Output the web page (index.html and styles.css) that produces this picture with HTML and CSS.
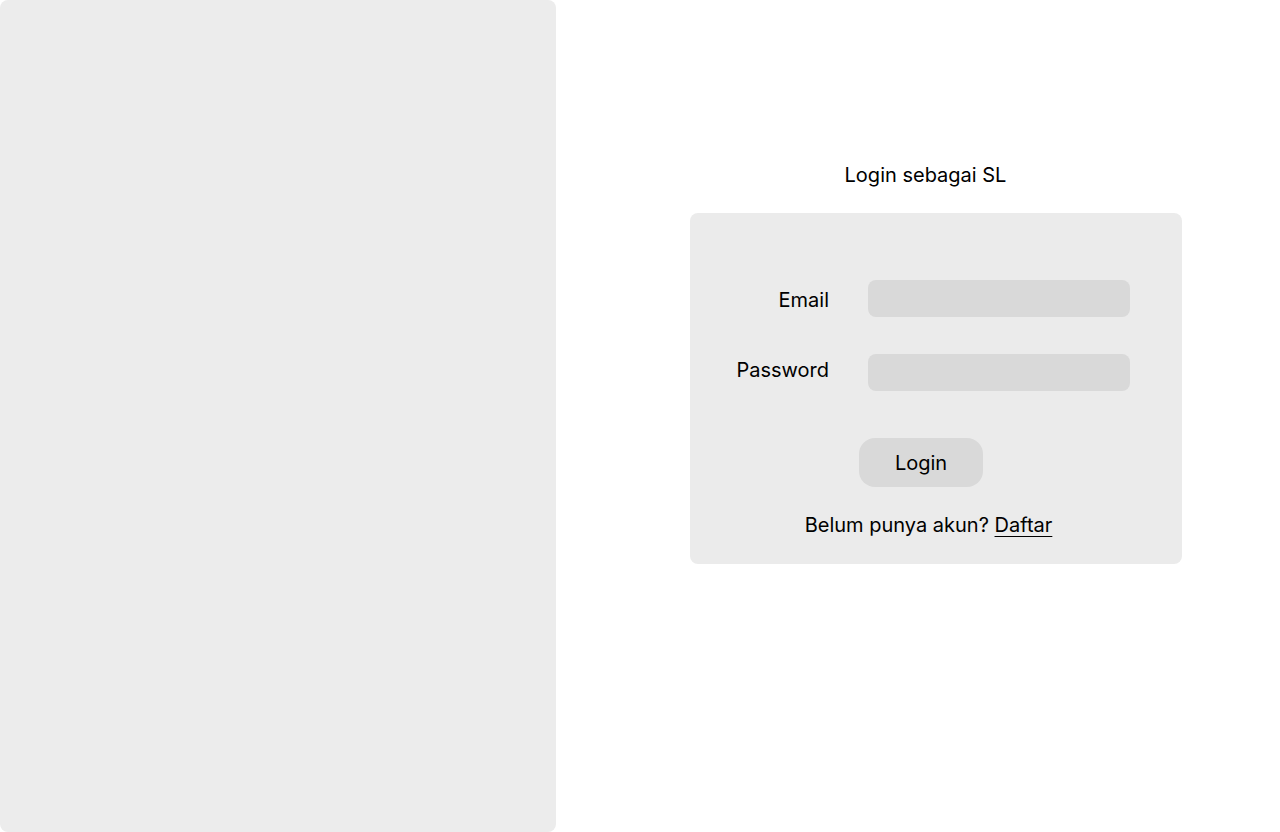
FILE: index.html
```html
<!DOCTYPE html>
<html lang="id">
<head>
<meta charset="utf-8">
<title>Login sebagai SL</title>
<link rel="stylesheet" href="styles.css">
</head>
<body>
<div class="page">
  <aside class="side-panel"></aside>
  <main class="login-pane">
    <h1 class="login-title">Login sebagai SL</h1>
    <form class="login-card">
      <div class="field-grid">
        <label class="field-label field-label-email" for="email">Email</label>
        <input class="field-input" id="email" type="email">
        <label class="field-label field-label-password" for="password">Password</label>
        <input class="field-input" id="password" type="password">
      </div>
      <div class="button-row">
        <button class="login-button" type="button">Login</button>
      </div>
      <p class="register-text">Belum punya akun? <a class="register-link" href="#">Daftar</a></p>
    </form>
  </main>
</div>
</body>
</html>
```

FILE: styles.css
```css
* { box-sizing: border-box; }
html, body { margin: 0; padding: 0; }
body {
  font-family: Inter, "Noto Sans", sans-serif;
  color: #000;
  background: #fff;
}
.page {
  display: flex;
  width: 1280px;
  height: 832px;
}
.side-panel {
  width: 556px;
  height: 832px;
  background: #ececec;
  border-radius: 8px;
  flex: none;
}
.login-pane {
  flex: 1;
  display: flex;
  flex-direction: column;
  align-items: center;
  padding-top: 163px;
  padding-left: 36px;
}
.login-title {
  margin: 0;
  font-size: 20px;
  line-height: 24px;
  font-weight: 400;
  padding-right: 21px;
}
.login-card {
  margin-top: 26px;
  width: 492px;
  height: 351px;
  background: #ebebeb;
  border-radius: 8px;
  padding-top: 67px;
}
.field-grid {
  display: grid;
  grid-template-columns: 139px 262px;
  column-gap: 39px;
  row-gap: 37px;
  align-items: center;
}
.field-label {
  text-align: right;
  font-size: 20px;
  line-height: 24px;
}
.field-label-email {
  margin-top: 3px;
}
.field-label-password {
  margin-bottom: 5px;
}
.field-input {
  height: 37px;
  width: 262px;
  border: none;
  border-radius: 8px;
  background: #d9d9d9;
  outline: none;
  font: inherit;
}
.button-row {
  display: flex;
  justify-content: center;
  padding-right: 30px;
  margin-top: 47px;
}
.login-button {
  width: 124px;
  height: 49px;
  border: none;
  border-radius: 16px;
  background: #d9d9d9;
  font-family: Inter, "Noto Sans", sans-serif;
  font-size: 20px;
  color: #000;
  padding: 0;
}
.register-text {
  margin: 26px 0 0;
  text-align: center;
  padding-right: 15px;
  font-size: 20px;
  line-height: 24px;
}
.register-link {
  color: #000;
  text-decoration: underline;
  text-underline-offset: 4px;
  text-decoration-thickness: 1px;
}
```
